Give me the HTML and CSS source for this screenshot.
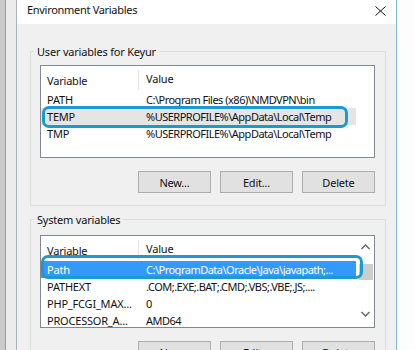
FILE: index.html
```html
<!DOCTYPE html>
<html lang="en">
<head>
  <meta charset="UTF-8" />
  <title>Environment Variables</title>
  <link rel="stylesheet" href="styles.css">
</head>
<body>
  <div class="desk">
    <!-- window behind the dialog -->
    <div class="behind"><div class="behind-edge"></div></div>

    <div class="dialog">
      <div class="titlebar">
        <span class="title">Environment Variables</span>
        <svg class="close" width="11" height="10" viewBox="0 0 11 10">
          <path d="M0.5 0.5 L10.5 9.5 M10.5 0.5 L0.5 9.5" stroke="#111" stroke-width="1" fill="none"/>
        </svg>
      </div>

      <div class="dialog-body">
        <!-- 使用者變數 -->
        <fieldset class="group">
          <legend>User variables for Keyur</legend>
          <div class="list">
            <div class="list-head">
              <span class="col-name">Variable</span>
              <span class="col-value">Value</span>
            </div>
            <div class="row"><span class="col-name">PATH</span><span class="col-value">C:\Program Files (x86)\NMDVPN\bin</span></div>
            <div class="row row-inactive marked"><span class="col-name">TEMP</span><span class="col-value">%USERPROFILE%\AppData\Local\Temp</span></div>
            <div class="row"><span class="col-name">TMP</span><span class="col-value">%USERPROFILE%\AppData\Local\Temp</span></div>
          </div>
          <div class="buttons">
            <button class="btn">New...</button>
            <button class="btn">Edit...</button>
            <button class="btn">Delete</button>
          </div>
        </fieldset>

        <!-- 系統變數 -->
        <fieldset class="group group-system">
          <legend>System variables</legend>
          <div class="list list-scroll">
            <div class="list-rows">
              <div class="list-head">
                <span class="col-name">Variable</span>
                <span class="col-value">Value</span>
              </div>
              <div class="row row-selected marked marked-wide"><span class="col-name">Path</span><span class="col-value">C:\ProgramData\Oracle\Java\javapath;...</span></div>
              <div class="row"><span class="col-name">PATHEXT</span><span class="col-value">.COM;.EXE;.BAT;.CMD;.VBS;.VBE;.JS;....</span></div>
              <div class="row"><span class="col-name">PHP_FCGI_MAX...</span><span class="col-value">0</span></div>
              <div class="row"><span class="col-name">PROCESSOR_A...</span><span class="col-value">AMD64</span></div>
            </div>
            <div class="scrollbar">
              <svg class="arrow" width="9" height="6" viewBox="0 0 9 6">
                <path d="M0.5 5 L4.5 1 L8.5 5" stroke="#606060" stroke-width="1.3" fill="none"/>
              </svg>
              <div class="track"><div class="thumb"></div></div>
              <svg class="arrow" width="9" height="6" viewBox="0 0 9 6">
                <path d="M0.5 1 L4.5 5 L8.5 1" stroke="#606060" stroke-width="1.3" fill="none"/>
              </svg>
            </div>
          </div>
          <div class="buttons">
            <button class="btn">New...</button>
            <button class="btn">Edit...</button>
            <button class="btn">Delete</button>
          </div>
        </fieldset>
      </div>
    </div>

    <div class="outside"></div>
  </div>
</body>
</html>
```

FILE: styles.css
```css
  body {
    margin: 0;
    font-family: 'Noto Sans', 'Open Sans', sans-serif;
    font-size: 11px;
    letter-spacing: -0.2px;
    color: #111;
    background: #fff;
  }

  .desk {
    display: flex;
    height: 350px;
    overflow: hidden;
  }

  /* 後方視窗 */
  .behind {
    width: 16px;
    flex-shrink: 0;
    background: #cbcbcb;
    display: flex;
    justify-content: flex-end;
  }

  .behind-edge {
    width: 10px;
    background: #ececec;
    border-left: 1px solid #9d9d9d;
  }

  .outside {
    flex: 1;
    background: #fdfdfd;
  }

  /* 對話框 */
  .dialog {
    width: 379px;
    flex-shrink: 0;
    border-left: 1px solid #a9b3b5;
    border-right: 1px solid #7fbcc6;
    background: #f0f0f0;
  }

  .titlebar {
    height: 24px;
    background: #fff;
    display: flex;
    align-items: center;
    justify-content: space-between;
    padding: 0 10px 5px 10px;
    box-sizing: border-box;
  }

  .title {
    font-size: 11px;
    letter-spacing: -0.3px;
  }

  .close {
    margin-top: 2px;
  }

  .dialog-body {
    padding: 20px 10px 0 13px;
  }

  /* 群組框 */
  .group {
    margin: 0;
    padding: 6px 10px 12px 9px;
    border: 1px solid #dcdcdc;
  }

  .group legend {
    line-height: 15px;
    padding: 0 3px;
    margin-left: -6px;
  }

  .group-system {
    margin-top: 6px;
    padding-top: 8px;
  }

  /* 清單 */
  .list {
    height: 91px;
    border: 1px solid #828790;
    background: #fff;
    overflow: hidden;
  }

  .list-scroll {
    display: flex;
  }

  .list-rows {
    flex: 1;
    min-width: 0;
  }

  .list-head {
    display: flex;
    height: 25px;
    align-items: center;
  }

  .list-head .col-name {
    align-self: stretch;
    display: flex;
    align-items: center;
    margin: 4px 0 1px 0;
    border-right: 1px solid #e5e5e5;
  }

  .row {
    position: relative;
    display: flex;
    width: 315px;
    height: 17px;
    align-items: center;
  }

  .col-name {
    width: 91px;
    padding-left: 6px;
    flex-shrink: 0;
    white-space: nowrap;
  }

  .col-value {
    flex: 1;
    min-width: 0;
    overflow: hidden;
    padding-left: 7px;
    white-space: nowrap;
  }

  .row .col-name {
    width: 92px;
  }

  .row .col-value {
    letter-spacing: -0.5px;
  }

  .row-inactive {
    background: #e5e5e5;
  }

  .row-selected {
    background: #3399ff;
    color: #fff;
  }

  /* 標註框 */
  .marked::after {
    content: "";
    position: absolute;
    left: 1px;
    top: -2px;
    width: 300px;
    height: 16px;
    border: 3px solid #1c9ad0;
    border-radius: 7px;
  }

  .marked-wide::after {
    left: 0;
    top: -6px;
    width: 316px;
    height: 18px;
  }

  /* 捲軸 */
  .scrollbar {
    width: 17px;
    flex-shrink: 0;
    display: flex;
    flex-direction: column;
    align-items: center;
    padding-top: 8px;
  }

  .track {
    height: 61px;
    width: 100%;
    padding-top: 14px;
    box-sizing: border-box;
  }

  .thumb {
    height: 16px;
    margin: 0 1px 0 2px;
    background: #cdcdcd;
  }

  .arrow {
    flex-shrink: 0;
  }

  /* 按鈕 */
  .buttons {
    display: flex;
    justify-content: flex-end;
    gap: 9px;
    margin-top: 13px;
  }

  .btn {
    width: 73px;
    height: 22px;
    padding: 0;
    font-family: 'Noto Sans', 'Open Sans', sans-serif;
    font-size: 11px;
    letter-spacing: -0.2px;
    color: #111;
    background: #e1e1e1;
    border: 1px solid #adadad;
  }
```
